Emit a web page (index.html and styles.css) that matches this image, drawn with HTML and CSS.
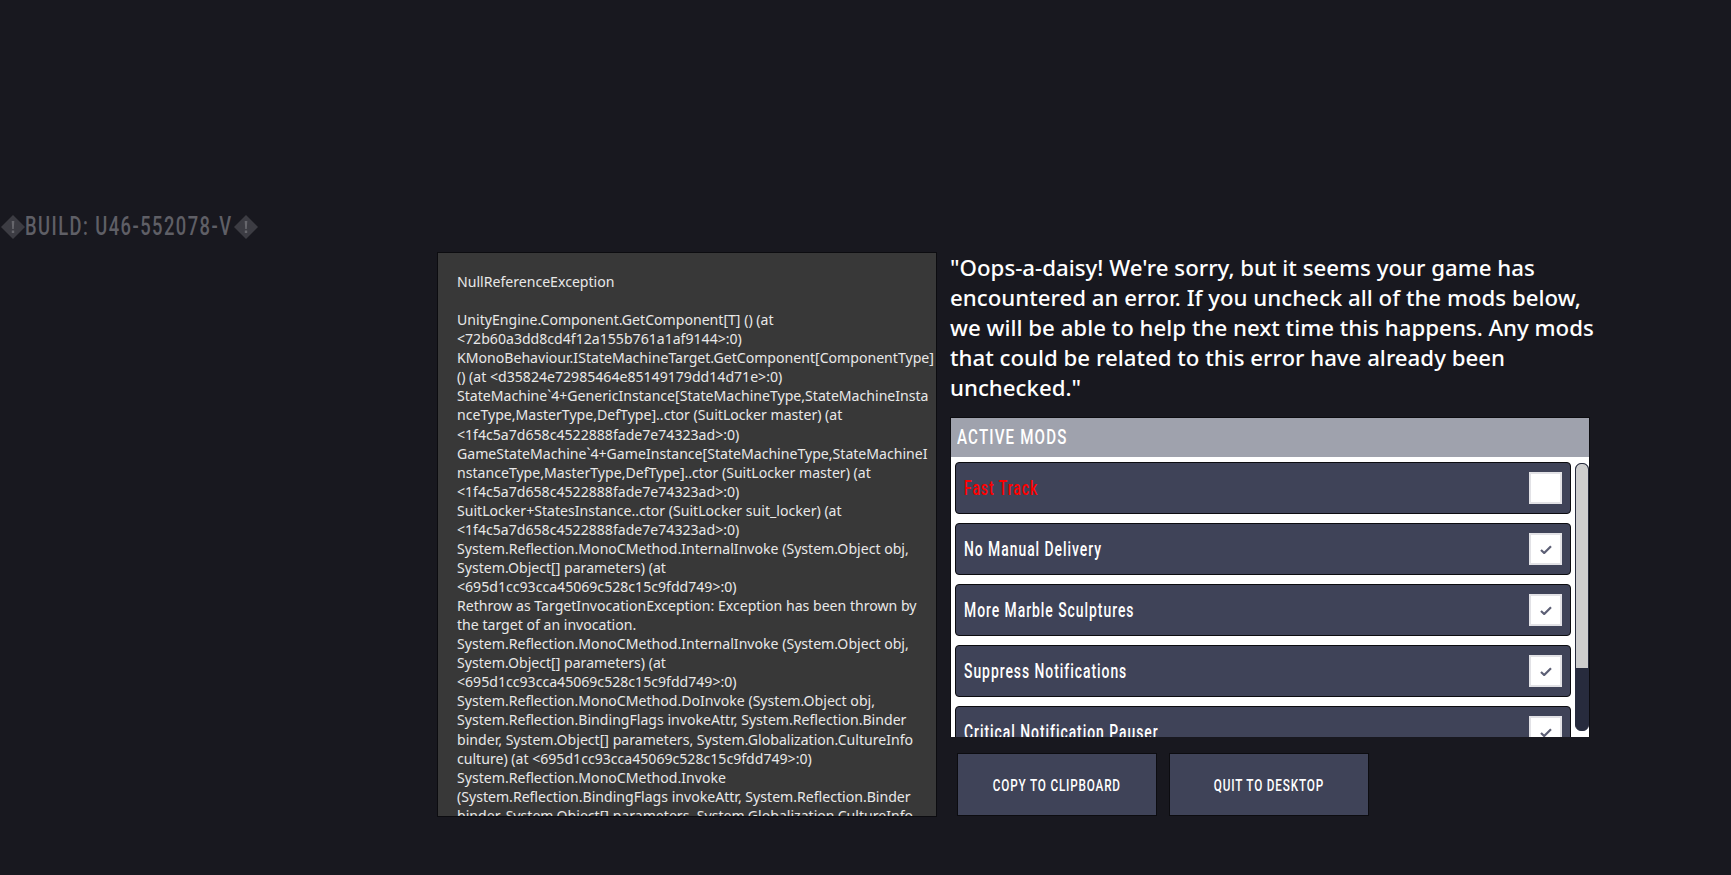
FILE: index.html
```html
<!DOCTYPE html>
<html lang="en">
<head>
<meta charset="utf-8">
<title>Oni crash</title>
<link rel="stylesheet" href="styles.css">
</head>
<body>
<div class="build">
  <svg class="warn" viewBox="0 0 24 24"><path class="warn-d" d="M12 0 24 12 12 24 0 12Z"/><path class="warn-m" d="M10.7 6h2.6l-.5 8h-1.6ZM10.8 15.6h2.4v2.4h-2.4Z"/></svg>
  <span class="build-text">BUILD: U46-552078-V</span>
  <svg class="warn" viewBox="0 0 24 24"><path class="warn-d" d="M12 0 24 12 12 24 0 12Z"/><path class="warn-m" d="M10.7 6h2.6l-.5 8h-1.6ZM10.8 15.6h2.4v2.4h-2.4Z"/></svg>
</div>
<main class="main">
  <section class="log">
<pre class="log-text">NullReferenceException

UnityEngine.Component.GetComponent[T] () (at
&lt;72b60a3dd8cd4f12a155b761a1af9144&gt;:0)
KMonoBehaviour.IStateMachineTarget.GetComponent[ComponentType]
() (at &lt;d35824e72985464e85149179dd14d71e&gt;:0)
StateMachine`4+GenericInstance[StateMachineType,StateMachineInsta
nceType,MasterType,DefType]..ctor (SuitLocker master) (at
&lt;1f4c5a7d658c4522888fade7e74323ad&gt;:0)
GameStateMachine`4+GameInstance[StateMachineType,StateMachineI
nstanceType,MasterType,DefType]..ctor (SuitLocker master) (at
&lt;1f4c5a7d658c4522888fade7e74323ad&gt;:0)
SuitLocker+StatesInstance..ctor (SuitLocker suit_locker) (at
&lt;1f4c5a7d658c4522888fade7e74323ad&gt;:0)
System.Reflection.MonoCMethod.InternalInvoke (System.Object obj,
System.Object[] parameters) (at
&lt;695d1cc93cca45069c528c15c9fdd749&gt;:0)
Rethrow as TargetInvocationException: Exception has been thrown by
the target of an invocation.
System.Reflection.MonoCMethod.InternalInvoke (System.Object obj,
System.Object[] parameters) (at
&lt;695d1cc93cca45069c528c15c9fdd749&gt;:0)
System.Reflection.MonoCMethod.DoInvoke (System.Object obj,
System.Reflection.BindingFlags invokeAttr, System.Reflection.Binder
binder, System.Object[] parameters, System.Globalization.CultureInfo
culture) (at &lt;695d1cc93cca45069c528c15c9fdd749&gt;:0)
System.Reflection.MonoCMethod.Invoke
(System.Reflection.BindingFlags invokeAttr, System.Reflection.Binder
binder, System.Object[] parameters, System.Globalization.CultureInfo</pre>
  </section>
  <section class="side">
    <p class="message">"Oops-a-daisy! We're sorry, but it seems your game has encountered an error. If you uncheck all of the mods below, we will be able to help the next time this happens. Any mods that could be related to this error have already been unchecked."</p>
    <div class="mods">
      <div class="mods-head"><span class="mods-title">ACTIVE MODS</span></div>
      <div class="mods-body">
        <div class="mods-list">
          <div class="mod"><span class="mod-name mod-name-red">Fast Track</span><span class="check"></span></div>
          <div class="mod"><span class="mod-name">No Manual Delivery</span><span class="check"><svg viewBox="0 0 12 9"><path d="M1 5 4.2 8 11 1.2"/></svg></span></div>
          <div class="mod"><span class="mod-name">More Marble Sculptures</span><span class="check"><svg viewBox="0 0 12 9"><path d="M1 5 4.2 8 11 1.2"/></svg></span></div>
          <div class="mod"><span class="mod-name">Suppress Notifications</span><span class="check"><svg viewBox="0 0 12 9"><path d="M1 5 4.2 8 11 1.2"/></svg></span></div>
          <div class="mod"><span class="mod-name">Critical Notification Pauser</span><span class="check"><svg viewBox="0 0 12 9"><path d="M1 5 4.2 8 11 1.2"/></svg></span></div>
        </div>
        <div class="scroll"><div class="thumb"></div></div>
      </div>
    </div>
    <div class="actions">
      <button class="btn"><span class="btn-label">COPY TO CLIPBOARD</span></button>
      <button class="btn"><span class="btn-label">QUIT TO DESKTOP</span></button>
    </div>
  </section>
</main>
</body>
</html>
```

FILE: styles.css
```css
* { box-sizing: border-box; }
html, body { margin: 0; height: 100%; }
body {
  background: #18181f;
  overflow: hidden;
  font-family: "Noto Sans", sans-serif;
}
.build {
  display: flex;
  align-items: center;
  height: 26px;
  margin-top: 214px;
  padding-left: 1px;
  color: #5f5f66;
}
.warn { width: 24px; height: 24px; flex: none; }
.warn-d { fill: #3c3c43; }
.warn-m { fill: #66666c; }
.build-text {
  display: block;
  flex: none;
  width: 209px;
  padding-bottom: 2px;
  font-family: Roboto, sans-serif;
  font-weight: 500;
  font-size: 25px;
  letter-spacing: 2px;
  white-space: nowrap;
  transform: scaleX(.733);
  transform-origin: left center;
}
.main {
  display: flex;
  margin-top: 12px;
  margin-left: 437px;
  height: 565px;
}
.log {
  width: 500px;
  height: 565px;
  flex: none;
  overflow: hidden;
  background: #383838;
  border: 1px solid #0c0c10;
  padding: 19px 0 0 19px;
}
.log-text {
  margin: 0;
  font-family: "Noto Sans", sans-serif;
  font-size: 14.1px;
  line-height: 19.07px;
  color: #e8e8e8;
  white-space: pre;
}
.side {
  display: flex;
  flex-direction: column;
  margin-left: 13px;
  width: 650px;
}
.message {
  margin: 0;
  height: 165px;
  padding-top: 1px;
  font-size: 22.25px;
  font-weight: 500;
  line-height: 30px;
  color: #fff;
}
.mods {
  width: 640px;
  height: 320px;
  background: #fff;
  border: 1px solid #0c0c10;
  border-bottom: 0;
  overflow: hidden;
}
.mods-head {
  height: 39px;
  padding-left: 6px;
  background: #9fa2ad;
  overflow: hidden;
}
.mods-title {
  display: block;
  color: #fff;
  font-family: Roboto, sans-serif;
  font-weight: 500;
  font-size: 21px;
  letter-spacing: 1.6px;
  line-height: 39px;
  white-space: nowrap;
  transform: scaleX(.72);
  transform-origin: left center;
}
.mods-body {
  display: flex;
  padding: 5px 0 0 4px;
}
.mods-list {
  display: flex;
  flex-direction: column;
  gap: 9px;
  width: 616px;
}
.mod {
  display: flex;
  flex: none;
  align-items: center;
  justify-content: space-between;
  height: 52px;
  padding: 0 8px;
  background: #3f4358;
  border: 1px solid #0c0c10;
  border-radius: 4px;
}
.mod-name {
  display: block;
  flex: none;
  width: 260px;
  color: #fff;
  font-family: Roboto, sans-serif;
  font-weight: 500;
  font-size: 20px;
  letter-spacing: 1.4px;
  white-space: nowrap;
  transform: scaleX(.695);
  transform-origin: left center;
}
.mod-name-red { color: #f00; }
.check {
  display: flex;
  align-items: center;
  justify-content: center;
  width: 33px;
  height: 32px;
  background: #fff;
  border: 2px solid #e2e2e6;
}
.check svg { width: 12px; height: 9px; fill: none; stroke: #5c5f75; stroke-width: 2.2; }
.scroll {
  width: 14px;
  height: 268px;
  margin: 1px 0 0 4px;
  background: #272b3d;
  border: 1px solid #272b3d;
  border-radius: 6px;
  overflow: hidden;
}
.thumb { height: 204px; background: #cdcdcd; border-radius: 5px 5px 0 0; }
.actions {
  display: flex;
  gap: 12px;
  margin-top: 16px;
  margin-left: 7px;
}
.btn {
  width: 200px;
  height: 63px;
  padding: 0;
  background: #3f4358;
  border: 1px solid #0c0c10;
}
.btn-label {
  display: inline-block;
  color: #fff;
  font-family: Roboto, sans-serif;
  font-weight: 500;
  font-size: 17px;
  letter-spacing: 1.2px;
  white-space: nowrap;
  transform: scaleX(.69);
}
```
